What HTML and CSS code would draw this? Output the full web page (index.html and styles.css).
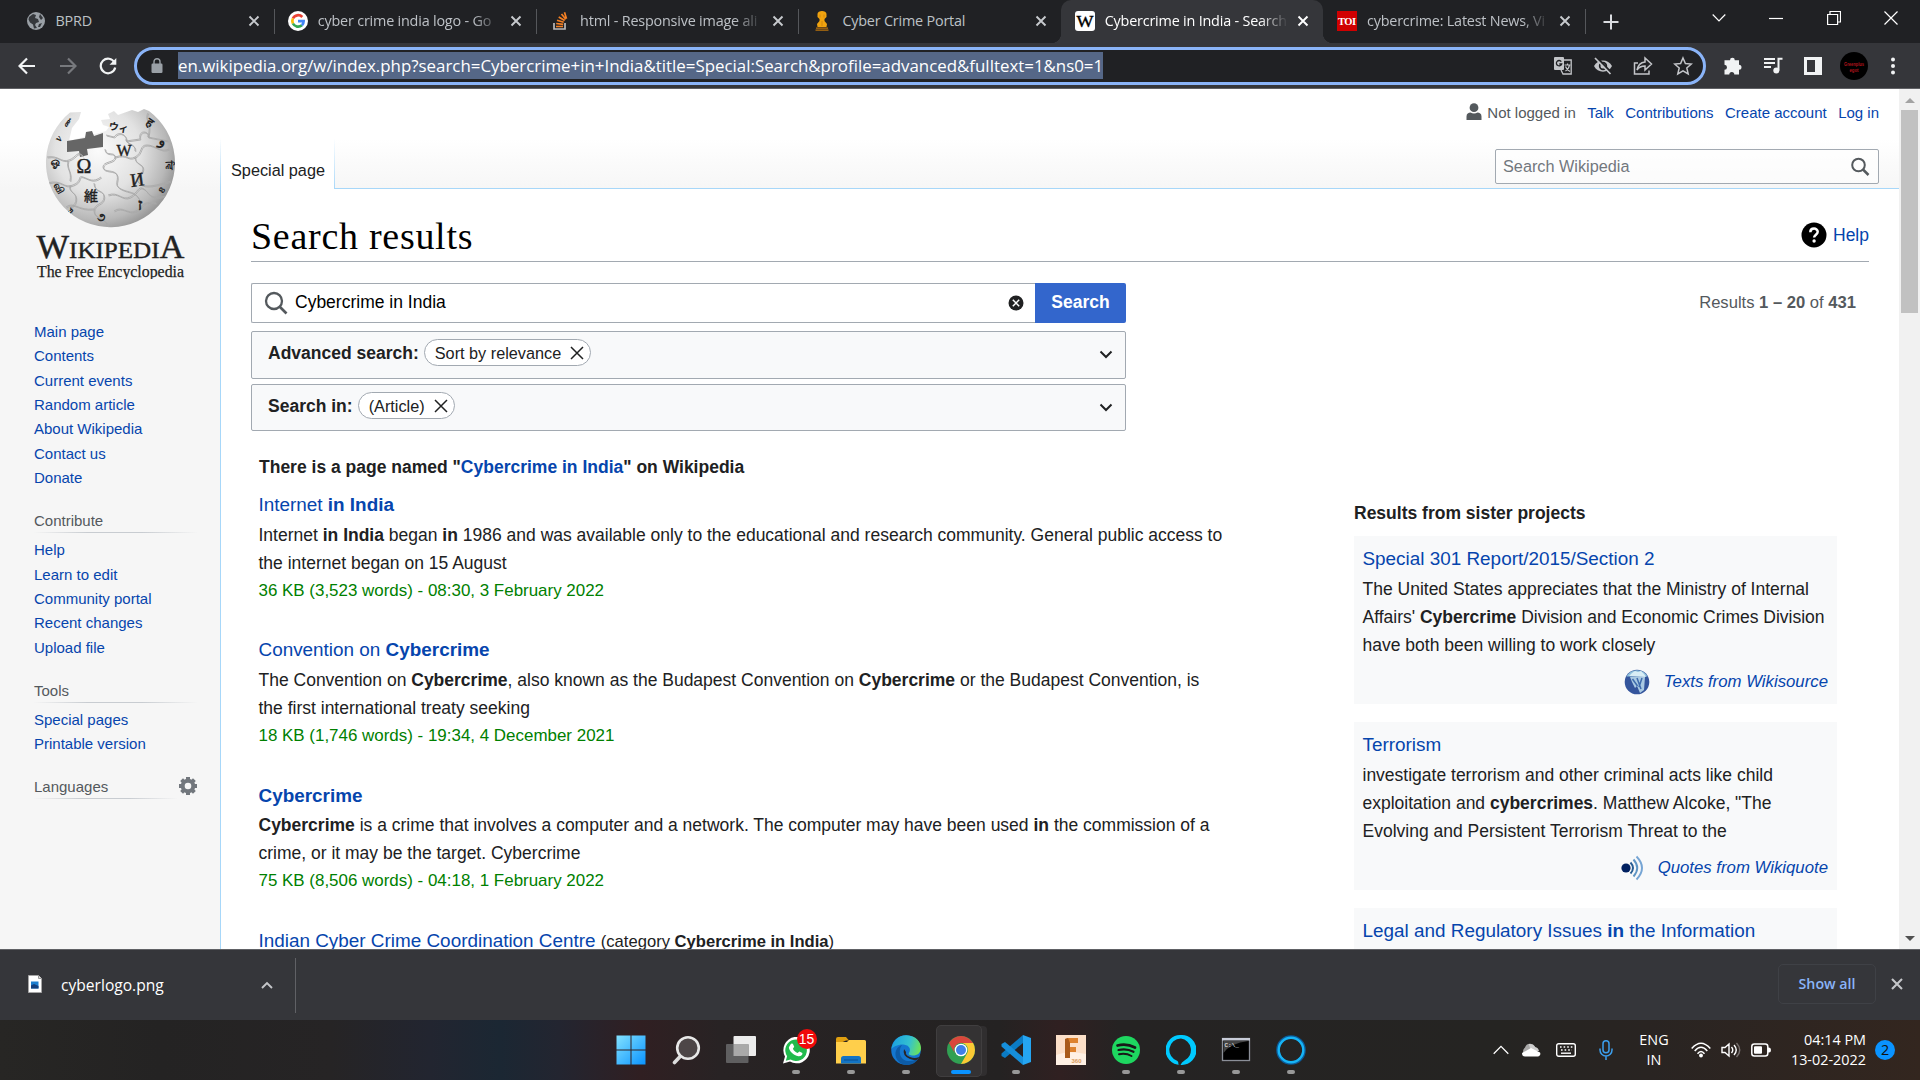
FILE: index.html
```html
<!DOCTYPE html>
<html lang="en">
<head>
<meta charset="utf-8">
<title>Cybercrime in India - Search results - Wikipedia</title>
<link rel="stylesheet" href="styles.css">
</head>
<body>
<div class="desktop">

<header class="tabstrip">
  <div class="tab">
    <svg class="fav" viewBox="0 0 20 20"><circle cx="10" cy="10" r="9" fill="#9aa0a6"/><path d="M3 6l4-3 3 1-1 3 3 1 1 3-3 1-1 2 2 3-3 .5-1-4-3-2-1.500-3zM14 3l3 4-2 2-2-3zM13 13l3-1-2 4-2 0z" fill="#35383c"/></svg>
    <span class="tab-title">BPRD</span>
    <svg class="x" viewBox="0 0 12 12"><path d="M1.500 1.500l9 9M10.500 1.500l-9 9"/></svg>
  </div>
  <div class="tab sep">
    <svg class="fav" viewBox="0 0 20 20"><circle cx="10" cy="10" r="10" fill="#fff"/><g fill="none" stroke-width="2.700"><path d="M14.300 6A5.800 5.800 0 0 0 4.900 7.500" stroke="#ea4335"/><path d="M4.900 7.500a5.800 5.800 0 0 0 0 5" stroke="#fbbc05"/><path d="M4.900 12.500a5.800 5.800 0 0 0 9 1.700" stroke="#34a853"/><path d="M13.900 14.200A5.500 5.500 0 0 0 15.600 10.200H10" stroke="#4285f4"/></g></svg>
    <span class="tab-title fade">cyber crime india logo - Go</span>
    <svg class="x" viewBox="0 0 12 12"><path d="M1.500 1.500l9 9M10.500 1.500l-9 9"/></svg>
  </div>
  <div class="tab sep">
    <svg class="fav" viewBox="0 0 20 20"><path d="M4 12v6h11v-6" fill="none" stroke="#bcbbbb" stroke-width="1.700"/><path d="M6 15.500h7M6.200 12.500l7 .8M7 9.300l6.700 2M8.700 6l6 3.600M11.500 3l4.300 5.300M14.500 1.200l2 6.500" stroke="#f48024" stroke-width="1.700"/></svg>
    <span class="tab-title fade">html - Responsive image ali</span>
    <svg class="x" viewBox="0 0 12 12"><path d="M1.500 1.500l9 9M10.500 1.500l-9 9"/></svg>
  </div>
  <div class="tab sep">
    <svg class="fav" viewBox="0 0 20 20"><g fill="#f0a30f"><path d="M5.500 3c0-4 9-4 9 0v3l-2 2v2l2.500 3-.5 3h-9L5 13l2.500-3V8l-2-2z"/></g><path d="M4 17.200h12M3.500 19.200h13" stroke="#b9730c" stroke-width="1.200"/><path d="M8 3.500v3M12 3.500v3M10 10v5" stroke="#c9820c" stroke-width=".8"/></svg>
    <span class="tab-title">Cyber Crime Portal</span>
    <svg class="x" viewBox="0 0 12 12"><path d="M1.500 1.500l9 9M10.500 1.500l-9 9"/></svg>
  </div>
  <div class="tab active">
    <svg class="fav" viewBox="0 0 20 20"><rect width="20" height="20" rx="3" fill="#fff"/><text x="10" y="15.500" text-anchor="middle" font-family="Liberation Serif, serif" font-size="17" textLength="17" lengthAdjust="spacingAndGlyphs" stroke="#000" stroke-width=".4">W</text></svg>
    <span class="tab-title fade">Cybercrime in India - Search</span>
    <svg class="x" viewBox="0 0 12 12"><path d="M1.500 1.500l9 9M10.500 1.500l-9 9"/></svg>
  </div>
  <div class="tab">
    <svg class="fav" viewBox="0 0 20 20"><rect width="20" height="20" fill="#d00001"/><text x="10" y="14" text-anchor="middle" font-family="Liberation Serif, serif" font-size="10.500" font-weight="700" fill="#fff" textLength="18">TOI</text></svg>
    <span class="tab-title fade">cybercrime: Latest News, Vi</span>
    <svg class="x" viewBox="0 0 12 12"><path d="M1.500 1.500l9 9M10.500 1.500l-9 9"/></svg>
  </div>
  <div class="newtab sep"><svg width="16" height="16" viewBox="0 0 16 16"><path d="M8 .5v15M.5 8h15" stroke="#dadce0" stroke-width="2"/></svg></div>
  <div class="winctl">
    <svg width="14" height="14" viewBox="0 0 14 14"><path d="M.7 3.500L7 9.800l6.300-6.300"/></svg>
    <svg width="14" height="14" viewBox="0 0 14 14"><path d="M0 7.500h14"/></svg>
    <svg width="14" height="14" viewBox="0 0 14 14"><path d="M.6 3.500h10v10h-10zM3 3.500v-3h10.500v10.500h-3"/></svg>
    <svg width="14" height="14" viewBox="0 0 14 14"><path d="M.5.5l13 13M13.500.5l-13 13"/></svg>
  </div>
</header>

<div class="toolbar">
  <div class="nav">
    <svg width="18" height="18" viewBox="0 0 18 18"><path d="M17 9H2M9 1.500L1.500 9 9 16.500" stroke="#f1f3f4"/></svg>
    <svg width="18" height="18" viewBox="0 0 18 18"><path d="M1 9h15M9 1.500L16.500 9 9 16.500" stroke="#77797d"/></svg>
    <svg width="18" height="18" viewBox="0 0 18 18"><path d="M15.500 5.500A7.300 7.300 0 1 0 16.200 10.500" stroke="#f1f3f4"/><path d="M17.300 1v6.800h-6.800z" fill="#f1f3f4"/></svg>
  </div>
  <div class="omnibox">
    <svg width="12" height="16" viewBox="0 0 12 16"><rect x=".5" y="5.500" width="11" height="9.500" rx="1.200" fill="#9aa0a6"/><path d="M3 6V3.700a3 3 0 0 1 6 0V6" fill="none" stroke="#9aa0a6" stroke-width="1.400"/></svg>
    <span class="url">en.wikipedia.org/w/index.php?search=Cybercrime+in+India&amp;title=Special:Search&amp;profile=advanced&amp;fulltext=1&amp;ns0=1</span>
    <span class="omni-icons">
      <svg width="20" height="20" viewBox="0 0 20 20"><path d="M9 4h9.200v14H10l-2-4" fill="none" stroke="#c3c5c9" stroke-width="1.300"/><rect x="1" y="1" width="10" height="13" rx="1" fill="#c3c5c9"/><path d="M8.300 5.600A2.700 2.700 0 1 0 8.700 8H6.300" fill="none" stroke="#202124" stroke-width="1.300"/><path d="M11.500 9h6M14.500 7.500V9M12.500 15c2-1 3.500-3 4-6M12.500 10.500c1 2.500 2.500 4 4.500 5" fill="none" stroke="#c3c5c9" stroke-width="1.200"/></svg>
      <svg width="20" height="20" viewBox="0 0 20 20"><path d="M1 10c3.500-7.500 14.500-7.500 18 0-3.500 7.500-14.500 7.500-18 0z" fill="#c3c5c9"/><circle cx="10" cy="10" r="4.200" fill="#202124"/><circle cx="10" cy="10" r="2.500" fill="#c3c5c9"/><path d="M3.500 1.300l15 15.500" stroke="#202124" stroke-width="2"/><path d="M2 2l15.500 16" stroke="#c3c5c9" stroke-width="1.700"/></svg>
      <svg width="20" height="20" viewBox="0 0 20 20"><path d="M5 7H1.500v11H16v-3.500M12 6V2l6.500 6-6.500 6v-4c-3.500 0-6 1-8 4 .8-4.500 3.500-7.500 8-8z" fill="none" stroke="#c3c5c9" stroke-width="1.500"/></svg>
      <svg width="20" height="20" viewBox="0 0 20 20"><path d="M10 2l2.400 5.500 6 .5-4.600 4 1.400 5.900L10 14.800l-5.200 3.100L6.200 12 1.600 8l6-.5z" fill="none" stroke="#c3c5c9" stroke-width="1.500"/></svg>
    </span>
  </div>
  <div class="ext">
    <svg width="20" height="20" viewBox="0 0 20 20"><path d="M7 4.200a2.400 2.400 0 0 1 4.800 0H16v4.600a2.500 2.500 0 0 1 0 5V18.500h-4.700a2.500 2.500 0 0 0-5 0H1.500v-4.700a2.500 2.500 0 0 0 0-5V4.200z" fill="#f1f3f4"/></svg>
    <svg width="20" height="20" viewBox="0 0 20 20"><path d="M1 3h11M1 7h11M1 11h7" stroke="#f1f3f4" stroke-width="2"/><path d="M15.500 14.500V2.700H19.500" fill="none" stroke="#f1f3f4" stroke-width="2"/><circle cx="13.300" cy="14.500" r="3" fill="#f1f3f4"/></svg>
    <svg width="20" height="20" viewBox="0 0 20 20"><path d="M1 1h18v18H1zM4 4v12h8V4z" fill="#f1f3f4" fill-rule="evenodd"/></svg>
    <svg width="28" height="28" viewBox="0 0 28 28"><circle cx="14" cy="14" r="14" fill="#000"/><text x="14" y="13.500" text-anchor="middle" font-family="Liberation Sans, sans-serif" font-size="5" font-weight="700" fill="#b3141c" textLength="20" lengthAdjust="spacingAndGlyphs">Greenplus</text><text x="14" y="19.500" text-anchor="middle" font-family="Liberation Sans, sans-serif" font-size="5" font-weight="700" fill="#b3141c" textLength="9" lengthAdjust="spacingAndGlyphs">egot</text></svg>
    <svg width="6" height="20" viewBox="0 0 6 20"><g fill="#f1f3f4"><circle cx="3" cy="3.500" r="2"/><circle cx="3" cy="10" r="2"/><circle cx="3" cy="16.500" r="2"/></g></svg>
  </div>
</div>

<div class="page">
  <aside class="sidebar">
    <svg class="logo" width="160" height="180" viewBox="0 0 160 180">
      <defs>
        <radialGradient id="globe" gradientUnits="userSpaceOnUse" cx="68" cy="52" r="86"><stop offset="0" stop-color="#fbfbfb"/><stop offset=".5" stop-color="#e2e2e2"/><stop offset=".8" stop-color="#b8b8b8"/><stop offset="1" stop-color="#8a8a8a"/></radialGradient>
        <clipPath id="ball"><path id="shape" d="M40 13.500A64.500 64.500 0 1 0 119 12l-5-2-6 3-6-2-14 5-4-4-6 3 2 5-9 1 2 5 6 2-3 4-37 10 3-13 7-9 2-7z"/></clipPath>
      </defs>
      <use href="#shape" fill="url(#globe)"/>
      <path d="M37 42l18-3 1-6 6-1 2 5 9-3v14l-16 2 1 6-8 2-1-6-12 1z" fill="#666"/>
      <g clip-path="url(#ball)">
        <g fill="none" stroke="#fff" stroke-width="1" transform="translate(.8 1)"><use href="#seams"/></g>
        <g id="seams" fill="none" stroke="#a9a9a9" stroke-width=".9"><path d="M17 58c12-2 14 6 22 3s8-10 14-4M75 50c0 8 10 2 10 8s-12 4-12 10 12 2 14 8-4 10 4 14 14 2 18 10M85 58c12-4 12 4 20 0s4-12 12-12 14 8 22 4M76 36l8 2c6-8 14 0 12 4l14-2c-2-10 10-8 8-2l20 4M17 84c16-4 16 6 26 2s4-10 10-8 10 6 18 0M40 86c-2 8 6 6 6 14s-8 6-4 14M64 84c0 10 10 6 10 14s-10 6-10 14 12 6 14 16M78 96c10-4 14 6 22 2s8-12 14-8 4 12 26 6M105 58c0 8 8 6 8 12s-10 8-4 14 18 2 32-2M36 108c8-6 12 4 28 2M84 112c8-6 14 4 22 0s4-10 20-8M96 40c0 6 10 4 9 12M118 14c-4 8 4 8 0 24M38 62c-2 8 4 10 2 20"/></g>
        <g fill="#222" font-family="Liberation Serif, Noto Sans CJK SC, serif" font-weight="700" text-anchor="middle">
          <text x="88" y="32" font-size="10" transform="rotate(10 88 32)">ウィ</text><text x="117" y="27" font-size="12" transform="rotate(35 117 27)">ह</text><text x="131" y="46" font-size="14" transform="rotate(20 131 46)">و</text><text x="31" y="42" font-size="11" transform="rotate(-45 31 42)">ν</text><text x="25" y="66" font-size="11" transform="rotate(-8 25 66)">ஓ</text><text x="26" y="91" font-size="10" transform="rotate(60 26 91)">வி</text><text x="136" y="66" font-size="10" transform="rotate(85 136 66)">ਵਿ</text><text x="39" y="114" font-size="9" transform="rotate(45 39 114)">უ</text><text x="71" y="122" font-size="12">૭</text><text x="134" y="92" font-size="9" transform="rotate(-60 134 92)">ខ</text><text x="40" y="25" font-size="9" transform="rotate(-55 40 25)">ሙ</text>
        </g>
      </g>
      <g fill="#222" font-family="Liberation Serif, Noto Sans CJK SC, serif" text-anchor="middle" stroke="#222" stroke-width=".4">
        <text x="54" y="74" font-size="20">Ω</text><text x="94" y="57" font-size="16">W</text><text x="108" y="87" font-size="19" transform="rotate(-8 108 87)">И</text><text x="61" y="102" font-size="14" font-family="Noto Sans CJK JP">維</text><text x="110" y="111" font-size="17" font-weight="700">ז</text>
      </g>
      <g fill="#222" font-family="Liberation Serif, serif" stroke="#222">
        <text x="6.500" y="159" stroke-width=".4" textLength="148" lengthAdjust="spacingAndGlyphs"><tspan font-size="33">W</tspan><tspan font-size="24">IKIPEDI</tspan><tspan font-size="33">A</tspan></text>
        <text x="7" y="177.500" font-size="16.500" stroke-width=".25" textLength="147" lengthAdjust="spacingAndGlyphs">The Free Encyclopedia</text>
      </g>
    </svg>
    <nav class="portal first"><a>Main page</a><a>Contents</a><a>Current events</a><a>Random article</a><a>About Wikipedia</a><a>Contact us</a><a>Donate</a></nav>
    <nav class="portal"><h3>Contribute</h3><a>Help</a><a>Learn to edit</a><a>Community portal</a><a>Recent changes</a><a>Upload file</a></nav>
    <nav class="portal"><h3>Tools</h3><a>Special pages</a><a>Printable version</a></nav>
    <nav class="portal lang"><h3>Languages</h3><svg width="20" height="20" viewBox="0 0 20 20"><circle cx="10" cy="10" r="5.300" fill="none" stroke="#72777d" stroke-width="4"/><path d="M10 1v3M10 16v3M1 10h3M16 10h3M3.600 3.600l2.200 2.200M14.200 14.200l2.200 2.200M3.600 16.400l2.200-2.200M14.200 5.800l2.200-2.200" stroke="#72777d" stroke-width="4"/></svg></nav>
  </aside>

  <div class="content">
    <div class="head">
      <div class="ns-tab"><span>Special page</span></div>
      <div class="head-right">
        <div class="personal">
          <svg width="16" height="18" viewBox="0 0 16 18"><circle cx="8" cy="4.700" r="4.400" fill="#54595d"/><path d="M.5 17v-3.500c0-3 2-4 4-4 2 1.300 5 1.300 7 0 2 0 4 1 4 4V17z" fill="#54595d"/></svg>
          <span class="anon">Not logged in</span><a>Talk</a><a>Contributions</a><a>Create account</a><a>Log in</a>
        </div>
        <div class="wpsearch"><span>Search Wikipedia</span><svg width="20" height="20" viewBox="0 0 20 20"><circle cx="8.500" cy="8" r="6.300" fill="none" stroke="#54595d" stroke-width="2"/><path d="M13 12.500l5.500 5.500" stroke="#54595d" stroke-width="2.500"/></svg></div>
      </div>
    </div>

    <main class="body">
      <div class="title-row">
        <h1>Search results</h1>
        <a class="help"><svg width="26" height="26" viewBox="0 0 26 26"><circle cx="13" cy="13" r="12.500" fill="#000"/><path d="M9.300 10.300c0-5 7.400-4.700 7.400-.5 0 2.800-3.600 3-3.600 5.800" fill="none" stroke="#fff" stroke-width="2.500"/><circle cx="13.100" cy="19" r="1.700" fill="#fff"/></svg><span>Help</span></a>
      </div>

      <div class="form-row">
        <div class="form">
          <div class="query">
            <div class="input"><svg width="24" height="24" viewBox="0 0 24 24"><circle cx="10" cy="10" r="8" fill="none" stroke="#54595d" stroke-width="2.300"/><path d="M16 16l6.500 6.500" stroke="#54595d" stroke-width="2.700"/></svg><span>Cybercrime in India</span><svg width="16" height="16" viewBox="0 0 16 16"><circle cx="8" cy="8" r="7.500" fill="#202122"/><path d="M4.800 4.800l6.400 6.400M11.200 4.800l-6.400 6.400" stroke="#fff" stroke-width="1.500"/></svg></div>
            <div class="btn">Search</div>
          </div>
          <div class="fold adv"><b>Advanced search:</b><span class="chip"><span>Sort by relevance</span><svg width="14" height="14" viewBox="0 0 14 14"><path d="M1 1l12 12M13 1L1 13"/></svg></span><svg class="chev" width="14" height="10" viewBox="0 0 14 10"><path d="M1.500 1.500L7 7l5.500-5.500"/></svg></div>
          <div class="fold ns"><b>Search in:</b><span class="chip"><span>(Article)</span><svg width="14" height="14" viewBox="0 0 14 14"><path d="M1 1l12 12M13 1L1 13" stroke-width="2"/></svg></span><svg class="chev" width="14" height="10" viewBox="0 0 14 10"><path d="M1.500 1.500L7 7l5.500-5.500"/></svg></div>
        </div>
        <div class="count">Results <b>1 – 20</b> of <b>431</b></div>
      </div>

      <div class="columns">
        <section class="results">
          <p class="exists">There is a page named "<a>Cybercrime in India</a>" on Wikipedia</p>
          <article><h2><a>Internet <b>in India</b></a></h2><p>Internet <b>in India</b> began <b>in</b> 1986 and was available only to the educational and research community. General public access to<br>the internet began on 15 August</p><div class="meta">36 KB (3,523 words) - 08:30, 3 February 2022</div></article>
          <article><h2><a>Convention on <b>Cybercrime</b></a></h2><p>The Convention on <b>Cybercrime</b>, also known as the Budapest Convention on <b>Cybercrime</b> or the Budapest Convention, is<br>the first international treaty seeking</p><div class="meta">18 KB (1,746 words) - 19:34, 4 December 2021</div></article>
          <article><h2><a><b>Cybercrime</b></a></h2><p><b>Cybercrime</b> is a crime that involves a computer and a network. The computer may have been used <b>in</b> the commission of a<br>crime, or it may be the target. Cybercrime</p><div class="meta">75 KB (8,506 words) - 04:18, 1 February 2022</div></article>
          <article><h2><a>Indian Cyber Crime Coordination Centre</a> <small>(category <b>Cybercrime in India</b>)</small></h2></article>
        </section>
        <section class="sister">
          <h4>Results from sister projects</h4>
          <div class="card"><h2><a>Special 301 Report/2015/Section 2</a></h2><p>The United States appreciates that the Ministry of Internal<br>Affairs' <b>Cybercrime</b> Division and Economic Crimes Division<br>have both been willing to work closely</p>
            <div class="src"><svg width="26" height="26" viewBox="0 0 26 26"><circle cx="13" cy="13" r="12.300" fill="#34559c"/><path d="M2.500 7.500a12 12 0 0 1 21 0z" fill="#8fc1dc"/><path d="M5 7l3-3 3-2 3 1 3-1 3 3 2 3z" fill="#d8edf5"/><path d="M6 8h15l-1 13-4 3-3-7-2 2-3-6z" fill="#a9c9e2"/><path d="M8.500 10l5 7M13 9l4 11M18 9l-3 9" stroke="#3e6bac" stroke-width="1.500"/></svg><a>Texts from Wikisource</a></div></div>
          <div class="card"><h2><a>Terrorism</a></h2><p>investigate terrorism and other criminal acts like child<br>exploitation and <b>cybercrimes</b>. Matthew Alcoke, "The<br>Evolving and Persistent Terrorism Threat to the</p>
            <div class="src quote"><svg width="24" height="26" viewBox="0 0 24 26"><circle cx="6" cy="13" r="4.600" fill="#002060"/><g fill="none" stroke-width="1.900"><path d="M10.500 7.500q5 5.500 0 11" stroke="#265c93"/><path d="M13.500 4.500q7.500 8.500 0 17" stroke="#5f95c4"/><path d="M16.500 1.500q11 11.500 0 23" stroke="#76a5d4"/></g></svg><a>Quotes from Wikiquote</a></div></div>
          <div class="card"><h2><a>Legal and Regulatory Issues <b>in</b> the Information</a></h2></div>
        </section>
      </div>
    </main>
  </div>
  <div class="scroll"><i class="up"></i><div class="thumb"></div><i class="down"></i></div>
</div>

<div class="downloads">
  <div class="item"><svg width="14" height="18" viewBox="0 0 14 18"><path d="M.5.500h10l3 3v14H.500z" fill="#fff" stroke="#a5a5a5"/><path d="M10.500.5v3h3" fill="#ddd" stroke="#999"/><rect x="3" y="6.500" width="7.500" height="7" fill="#1d7fd0"/><path d="M3 13.500v-3l3-1.500 4.500 2v2.500z" fill="#143f7d"/></svg><span class="fname">cyberlogo.png</span><svg width="12" height="8" viewBox="0 0 12 8"><path d="M1 7l5-5 5 5" fill="none" stroke="#c5c7ca" stroke-width="1.900"/></svg></div>
  <div class="dl-right"><div class="showall">Show all</div><svg width="12" height="12" viewBox="0 0 12 12"><path d="M1 1l10 10M11 1L1 11" stroke="#c5c7ca" stroke-width="2.100"/></svg></div>
</div>

<footer class="taskbar">
  <div class="apps">
    <span class="app"><svg viewBox="0 0 30 30"><defs><linearGradient id="win" x1="0" y1="0" x2="1" y2="1"><stop offset="0" stop-color="#83e2ff"/><stop offset="1" stop-color="#0a93ff"/></linearGradient></defs><path d="M.5.5h14v14H.5zM15.500.5h14v14h-14zM.5 15.500h14v14H.5zM15.500 15.500h14v14h-14z" fill="url(#win)"/></svg></span>
    <span class="app"><svg viewBox="0 0 30 30"><path d="M11 19.500L3.500 27.500" stroke="#ddd" stroke-width="3.600" stroke-linecap="round"/><circle cx="17" cy="13" r="10.800" fill="#4d4647" stroke="#e8e8e8" stroke-width="2.600"/></svg></span>
    <span class="app"><svg viewBox="0 0 30 30"><rect x="7.500" y="1" width="22.500" height="20" rx="1" fill="#ececec"/><rect x="0" y="9" width="22.500" height="19" rx="1" fill="#5f5f60"/><path d="M7.500 9h15v12h-15z" fill="#a9a9a9"/></svg></span>
    <span class="app run"><svg viewBox="0 0 30 30"><path d="M2 28.500l2-7A13.200 13.200 0 1 1 9 26.600z" fill="#fff"/><path d="M4.800 25.700l1.300-4.500A10.800 10.800 0 1 1 9.600 24.500z" fill="#20ba4c"/><path d="M9.500 9.500c1-1.500 2.300-1 2.700 0l1 2.300-1.300 1.900c1 2 2.500 3.400 4.700 4.300l1.800-1.500 3 1.500c.5 2-1.600 3.600-4 3.300-5-1-9.500-5.300-9.500-9z" fill="#fff"/></svg><em>15</em></span>
    <span class="app run"><svg viewBox="0 0 30 30"><path d="M0 4q0-2 2-2h8l3 3.500h-3L0 10z" fill="#e09f10"/><path d="M0 7h11l2-2h15.500q1.500 0 1.500 1.500V28.500H0z" fill="#ffcf4b"/><path d="M5 28.500v-5q0-2.500 2.500-2.500h15q2.500 0 2.500 2.500v5z" fill="#1374c5"/><path d="M8 25h14" stroke="#0b4e91"/></svg></span>
    <span class="app run"><svg viewBox="0 0 30 30"><defs><linearGradient id="edge" x1="0" y1=".3" x2="1" y2=".5"><stop offset="0" stop-color="#1a9fe0"/><stop offset=".6" stop-color="#34c1cf"/><stop offset="1" stop-color="#6be25b"/></linearGradient></defs><circle cx="15" cy="15" r="14.800" fill="#1477d0"/><path d="M.3 14C2 5 8 0 15.500.200 25 .5 30 7 30 13c0 5-4 7.500-8 7.500-3 0-5-1-4-2.500 3-5-1.500-8.500-6-8.500C6 9.500 2 12 .3 14z" fill="url(#edge)"/><path d="M11 10c-4 5-3 15 6 16 5 .5 9-1.500 11-3.500-5 10-19 10-23 0-2-7 2-11 6-12.500z" fill="#0d5ba6"/><path d="M13 14q-2 7 6 10t9-2q-4 2-9 0t-4-5z" fill="#292426"/></svg></span>
    <span class="app run current"><svg viewBox="0 0 30 30"><circle cx="15" cy="15" r="14" fill="#31a053"/><path d="M2.900 8A14 14 0 0 1 27.100 8H15a7 7 0 0 0-6 10.500z" fill="#d9473c"/><path d="M27.100 8A14 14 0 0 1 15 29l6-10.500A7 7 0 0 0 15 8z" fill="#fbc934"/><circle cx="15" cy="15" r="6.300" fill="#fff"/><circle cx="15" cy="15" r="5" fill="#3f7fe8"/></svg></span>
    <span class="app run"><svg viewBox="0 0 30 30"><path d="M22 0l8 3v24l-8 3z" fill="#25a5f2"/><path d="M22 0v8L4 23l-3.500-2V18.500z" fill="#0b7bc4"/><path d="M22 30v-8L4 7 .5 9v2.500z" fill="#168fdb"/></svg></span>
    <span class="app"><svg viewBox="0 0 30 30"><rect width="30" height="30" fill="#fcdfc8"/><path d="M0 20q12-5 30-1v11H0z" fill="#fff0e4"/><path d="M9 4l3-1h10v5h-8v4h6v5h-6v6H9z" fill="#dd812d"/><path d="M9 4l3-1 2 5v15H9z" fill="#a95b1c"/><text x="15.500" y="28" font-family="Liberation Sans, sans-serif" font-size="6" font-weight="700" fill="#d99a5b">360</text></svg></span>
    <span class="app run"><svg viewBox="0 0 30 30"><circle cx="15" cy="15" r="14" fill="#1ed760"/><g fill="none" stroke="#181818" stroke-linecap="round"><path d="M6.500 10.500q9-2.500 17.500 2" stroke-width="2.700"/><path d="M7.500 15q8-2 15 1.800" stroke-width="2.200"/><path d="M8 19.200q7-1.500 12.500 1.800" stroke-width="1.900"/></g></svg></span>
    <span class="app run"><svg viewBox="0 0 30 30"><path d="M15 0a15 15 0 0 1 1 30l-2 0A15 15 0 0 1 15 0zM15 3.500a11.500 11.500 0 0 0-3.500 22.500q1 .5 1 4h2q1-3 4-4.500A11.700 11.700 0 0 0 15 3.500z" fill="#00caff" fill-rule="evenodd"/></svg></span>
    <span class="app run"><svg viewBox="0 0 30 30"><rect x="1.500" y="3.500" width="27" height="22" fill="#000" stroke="#8b8f98" stroke-width="1.300"/><path d="M1 3h28v2.500H1z" fill="#c8ccd8"/><path d="M2.500 6h25q-18 2-25 12z" fill="#444"/><text x="3.500" y="12" font-family="Liberation Mono, monospace" font-size="6" fill="#fff">C:\_</text></svg></span>
    <span class="app run"><svg viewBox="0 0 30 30"><circle cx="15" cy="15" r="13" fill="none" stroke="#0b5c9b" stroke-width="3.600"/><circle cx="15" cy="15" r="12.300" fill="none" stroke="#17b4f5" stroke-width="2.400"/></svg></span>
  </div>
  <div class="tray">
    <svg width="16" height="10" viewBox="0 0 16 10"><path d="M.7 8.700L8 1.400l7.300 7.300" fill="none" stroke="#fff" stroke-width="1.300"/></svg>
    <svg width="20" height="14" viewBox="0 0 20 14"><path d="M5 13a5 5 0 0 1-1-8.500A5.500 5.500 0 0 1 14 3.500l1 3z" fill="#a8a8a8"/><path d="M8 2l2 6 8 0A5 5 0 0 0 14 4 6 6 0 0 0 8 1z" fill="#cecece"/><path d="M1 10l9-5 9 4.500A2.700 2.700 0 0 1 17 13.500H4Q1 13.500 1 10z" fill="#fff"/></svg>
    <svg width="20" height="14" viewBox="0 0 20 14"><rect x=".7" y=".7" width="18.600" height="12.600" rx="2" fill="none" stroke="#fff" stroke-width="1.400"/><path d="M4 4h13M5 7h11" stroke="#fff" stroke-width="1.600" stroke-dasharray="1.600 2"/><path d="M5 10.200h10" stroke="#fff" stroke-width="1.400"/></svg>
    <svg width="14" height="20" viewBox="0 0 14 20"><rect x="4" y=".8" width="6" height="12" rx="3" fill="none" stroke="#3c9fee" stroke-width="1.500"/><path d="M1 8.500v1.500a6 6 0 0 0 12 0V8.500M7 16v4" fill="none" stroke="#3c9fee" stroke-width="1.500"/></svg>
    <div class="lang-ind"><span>ENG</span><span>IN</span></div>
    <svg width="20" height="16" viewBox="0 0 20 16"><g fill="none" stroke="#fff" stroke-width="1.500"><path d="M.7 6.500q9.300-10.500 18.600 0M3.700 9q6.300-7.500 12.600 0M6.500 11.700q3.500-4.500 7 0"/></g><circle cx="10" cy="13.500" r="1.900" fill="#fff"/></svg>
    <svg width="20" height="16" viewBox="0 0 20 16"><g fill="none" stroke="#fff" stroke-width="1.400"><path d="M1 5.500h3L8 2v12l-4-3.500H1zM10.500 5q2.500 3 0 6M13 3q4.500 5 0 10"/><path d="M15.500 1q6.500 7 0 14" stroke="#77706e"/></g></svg>
    <svg width="20" height="14" viewBox="0 0 20 14"><rect x=".8" y="1" width="16" height="12" rx="2.500" fill="none" stroke="#fff" stroke-width="1.500"/><rect x="3" y="3.200" width="8" height="7.600" rx="1" fill="#fff"/><path d="M17 4.500h1q2 0 2 2.500t-2 2.500h-1z" fill="#fff"/></svg>
    <div class="clock"><span>04:14 PM</span><span>13-02-2022</span></div>
    <div class="badge">2</div>
  </div>
</footer>
</div>
</body>
</html>
```
FILE: styles.css
```css
* { box-sizing: border-box; margin: 0; padding: 0; }
body { width: 1920px; height: 1080px; overflow: hidden; font-family: "Liberation Sans", Arial, sans-serif; }
svg { display: block; flex: none; }
.desktop { display: flex; flex-direction: column; width: 1920px; height: 1080px; overflow: hidden; }

/* Browser tabs */
.tabstrip, .toolbar, .downloads, .taskbar { font-family: "Open Sans", "Noto Sans", sans-serif; }
.tabstrip { display: flex; flex: none; height: 43px; padding-left: 11.500px; background: #202124; }
.tab { display: flex; align-items: center; width: 262.300px; padding: 0 14px; height: 42px; color: #bdc1c6; font-size: 14.400px; position: relative; }
.fav { width: 20px; height: 20px; }
.tab-title { flex: 1; margin: -1px 10px 0; overflow: hidden; white-space: nowrap; letter-spacing: -.2px; }
.fade { mask-image: linear-gradient(90deg, #000 155px, transparent 183px); }
.x { width: 12px; height: 12px; }
.x path { stroke: #c7cace; stroke-width: 1.900; }
.active .x path { stroke: #fff; }
.sep::before { content: ""; position: absolute; left: 0; top: 9px; width: 1px; height: 25px; background: #55575b; }
.active { height: 43px; background: #35363a; color: #fff; border-radius: 10px 10px 0 0; padding-bottom: 1px; }
.active::before, .active::after { content: ""; position: absolute; bottom: 0; width: 10px; height: 10px; }
.active::before { left: -10px; background: radial-gradient(circle at 0 0, transparent 10px, #35363a 10.500px); }
.active::after { right: -10px; background: radial-gradient(circle at 100% 0, transparent 10px, #35363a 10.500px); }
.newtab { position: relative; display: flex; align-items: center; padding-left: 18px; height: 43px; }
.winctl { display: flex; gap: 43.500px; margin-left: auto; padding: 11px 22px 0 0; }
.winctl path { fill: none; stroke: #fff; stroke-width: 1.200; }

/* Address bar */
.toolbar { display: flex; align-items: center; flex: none; height: 46px; background: #35363a; border-bottom: 1px solid #606165; padding: 0 24px 0 18px; }
.nav { display: flex; gap: 22.500px; width: 116px; }
.nav path { fill: none; stroke-width: 2.200; }
.nav svg:last-child path:last-child { fill: #f1f3f4; stroke: none; }
.omnibox { display: flex; align-items: center; width: 1572px; height: 38px; border: 3px solid #8ab4f8; border-radius: 19px; background: #202124; padding: 0 10px 0 14px; }
.url { margin-left: 15px; height: 27px; line-height: 27px; background: #556787; color: #fff; font-size: 16.890px; white-space: nowrap; }
.omni-icons { display: flex; gap: 20px; margin-left: auto; }
.ext { display: flex; align-items: center; justify-content: space-between; margin-left: 17px; width: 173px; }
.ext svg:nth-child(4) { margin: 0 2px 0 -2px; }

/* Wikipedia page */
.page { display: flex; flex: none; height: 860px; overflow: hidden; background: linear-gradient(#fff 50px, #f6f6f6 100px); }
a { color: #0645ad; }
.sidebar { width: 220px; flex: none; font-size: 15px; }
.logo { margin: 10px 0 0 30px; }
.portal { display: flex; flex-direction: column; margin: 0 23px 19.500px 34px; line-height: 24.350px; }
.portal.first { margin-top: 41px; margin-bottom: 19.500px; }
.portal h3 { font-size: 15px; font-weight: 400; color: #54595d; line-height: 20px; height: 23px; margin-bottom: 5.500px; padding-top: 1px; border-bottom: 1px solid; border-image: linear-gradient(90deg, rgba(200,204,209,0), #c8ccd1 33%, #c8ccd1 66%, rgba(200,204,209,0)) 1; }
.lang { flex-direction: row; justify-content: space-between; }
.lang h3 { width: 143px; }
.lang svg { margin-right: -1px; }
.content { flex: 1; border-left: 1px solid; border-image: linear-gradient(transparent 50px, #a7d7f9 100px) 1; border-width: 0 0 0 1px; }
.head { display: flex; justify-content: space-between; align-items: flex-end; height: 100px; border-bottom: 1px solid #a7d7f9; padding-right: 20px; }
.ns-tab { width: 114px; height: 50px; margin-bottom: -1px; padding: 22px 0 0 10px; background: linear-gradient(#fff, #fff); border-right: 1px solid; border-image: linear-gradient(transparent, #a7d7f9) 1; border-width: 0 1px 0 0; font-size: 16.250px; line-height: 18px; color: #202122; }
.head-right { align-self: flex-start; padding-top: 11px; display: flex; flex-direction: column; align-items: flex-end; }
.personal { display: flex; align-items: center; height: 24px; font-size: 15px; gap: 11.400px; }
.personal svg { margin-right: -6.500px; margin-top: -1px; }
.anon { color: #54595d; }
.wpsearch { display: flex; justify-content: space-between; align-items: center; width: 384px; height: 35px; margin-top: 25px; border: 1px solid #a2a9b1; border-radius: 2px; background: rgba(255,255,255,.5); padding: 0 8px 0 7px; font-size: 16.250px; color: #72777d; }
.body { background: #fff; padding: 20px 30px 0; height: 760px; overflow: hidden; color: #202122; font-size: 17.500px; line-height: 28px; }
.title-row { display: flex; justify-content: space-between; align-items: center; height: 53px; border-bottom: 1px solid #a2a9b1; }
h1 { font: 400 38px/52px Georgia, "Liberation Serif", serif; letter-spacing: .72px; padding-top: 2px; color: #000; }
.help { display: flex; align-items: center; gap: 6px; }
.form-row { display: flex; justify-content: space-between; margin-top: 21px; }
.form { width: 875px; }
.query { display: flex; height: 40px; }
.input { display: flex; align-items: center; flex: 1; border: 1px solid #a2a9b1; border-right: 0; border-radius: 2px 0 0 2px; padding: 0 11px 0 12px; color: #000; }
.input span { margin: -3px auto 0 7px; }
.btn { width: 91px; background: #36c; color: #fff; font-weight: 700; text-align: center; line-height: 38px; border-radius: 0 2px 2px 0; }
.fold { display: flex; align-items: flex-start; background: #f8f9fa; border: 1px solid #a2a9b1; border-radius: 2px; padding: 7px 12px 0 16px; }
.fold b { line-height: 28px; }
.adv { height: 48px; margin-top: 8px; }
.ns { height: 47px; margin-top: 5px; }
.chip { display: flex; align-items: center; gap: 9px; height: 27px; margin-left: 5px; padding: 0 6px 0 10px; border: 1px solid #a2a9b1; border-radius: 14px; background: #fff; font-size: 16.250px; }
.chip path { stroke: #202122; stroke-width: 1.500; }
.chev { margin: 11px 0 0 auto; }
.chev path { fill: none; stroke: #202122; stroke-width: 2; }
.count { margin-right: 13px; padding-top: 6px; font-size: 16.600px; color: #54595d; }
.columns { display: flex; justify-content: space-between; margin-top: 22px; }
.results { padding-left: 7.500px; white-space: nowrap; }
.exists { font-weight: 700; padding-left: .5px; margin-bottom: 10px; }
article { height: 145.400px; }
h2 { font-size: 18.900px; font-weight: 400; line-height: 28px; }
article p { margin-top: 1.500px; }
h2 small { font-size: 16.600px; }
.meta { color: #008000; font-size: 16.960px; line-height: 27px; }
.sister { width: 483px; margin: 46px 32px 0 0; white-space: nowrap; }
.sister h4 { font-size: 17.500px; margin-bottom: 9px; }
.card { height: 168px; margin-bottom: 18px; padding: 9px 9px 0 8.500px; background: #f8f9fa; }
.card p { margin-top: 2px; }
.src { display: flex; justify-content: flex-end; align-items: center; gap: 13.500px; margin-top: 9px; font-size: 16.780px; font-style: italic; }
.scroll { display: flex; flex-direction: column; align-items: center; width: 21px; flex: none; background: #f1f1f1; padding: 9px 0 8px; }
.thumb { width: 17px; height: 203px; margin-top: 7px; background: #c1c1c1; }
.up, .down { border: 5px solid transparent; width: 0; height: 0; }
.up { border-top: 0; border-bottom-color: #a3a3a3; }
.down { border-bottom: 0; border-top-color: #505050; margin-top: auto; }

/* Download shelf */
.downloads { display: flex; justify-content: space-between; align-items: center; flex: none; height: 71px; background: #35363a; border-top: 1px solid #606165; }
.item { display: flex; align-items: center; width: 296px; height: 55px; padding: 0 22.500px 0 28px; border-right: 1px solid #606165; color: #fff; font-size: 15.600px; }
.item svg:first-child { margin-top: -2px; }
.fname { margin: 0 auto 0 19px; }
.dl-right { display: flex; align-items: center; gap: 15px; padding-right: 17px; margin-top: -2px; }
.showall { width: 98px; height: 40px; line-height: 38px; text-align: center; border: 1px solid #3f4146; border-radius: 5px; color: #8ab4f8; font-size: 14.200px; font-weight: 600; }

/* Taskbar */
.taskbar { display: flex; justify-content: space-between; height: 60px; background: linear-gradient(90deg, #272624 0, #242323 160px, #262425 330px, #222530 430px, #1b2733 500px, #232530 560px, #301f22 640px, #282324 720px, #242222 1000px, #302021 1060px, #252323 1120px, #252422 1500px, #292422 1650px, #33261f 1920px); }
.apps { display: flex; gap: 1px; padding-left: 603.500px; align-items: center; }
.app { position: relative; display: flex; align-items: center; justify-content: center; width: 54px; height: 60px; }
.app svg { width: 30px; height: 30px; position: relative; }
.run::after { content: ""; position: absolute; bottom: 6px; left: 23px; width: 8px; height: 4px; border-radius: 2px; background: #989898; }
.current::after { left: 17px; width: 20px; background: #0a93ff; }
.current::before { content: ""; position: absolute; left: 2px; top: 5px; width: 44px; height: 50px; border-radius: 5px; background: #343233; border: 1px solid #403e3f; box-shadow: 6px 0 0 -1px #302e2f; }
.app em { position: absolute; left: 28px; top: 9px; width: 20px; height: 20px; border-radius: 50%; background: #f00a0a; color: #fff; font: 14px/20px "Liberation Sans", sans-serif; text-align: center; }
.tray { display: flex; align-items: center; padding-right: 25px; color: #fff; font-size: 14.400px; line-height: 20px; }
.lang-ind, .clock { display: flex; flex-direction: column; }
.lang-ind { align-items: center; width: 40px; margin: 0 17px 0 21px; }
.clock { align-items: flex-end; width: 76px; margin: 0 9px 0 9px; white-space: nowrap; }
.tray svg { margin-right: 10px; }
.tray svg:nth-child(1) { margin-right: 12px; }
.tray svg:nth-child(2) { margin-right: 15px; }
.tray svg:nth-child(3) { margin-right: 23px; }
.tray svg:nth-child(4) { margin-right: 0; }
.badge { width: 20px; height: 20px; border-radius: 50%; background: #0a93ff; color: #111; text-align: center; }
```
